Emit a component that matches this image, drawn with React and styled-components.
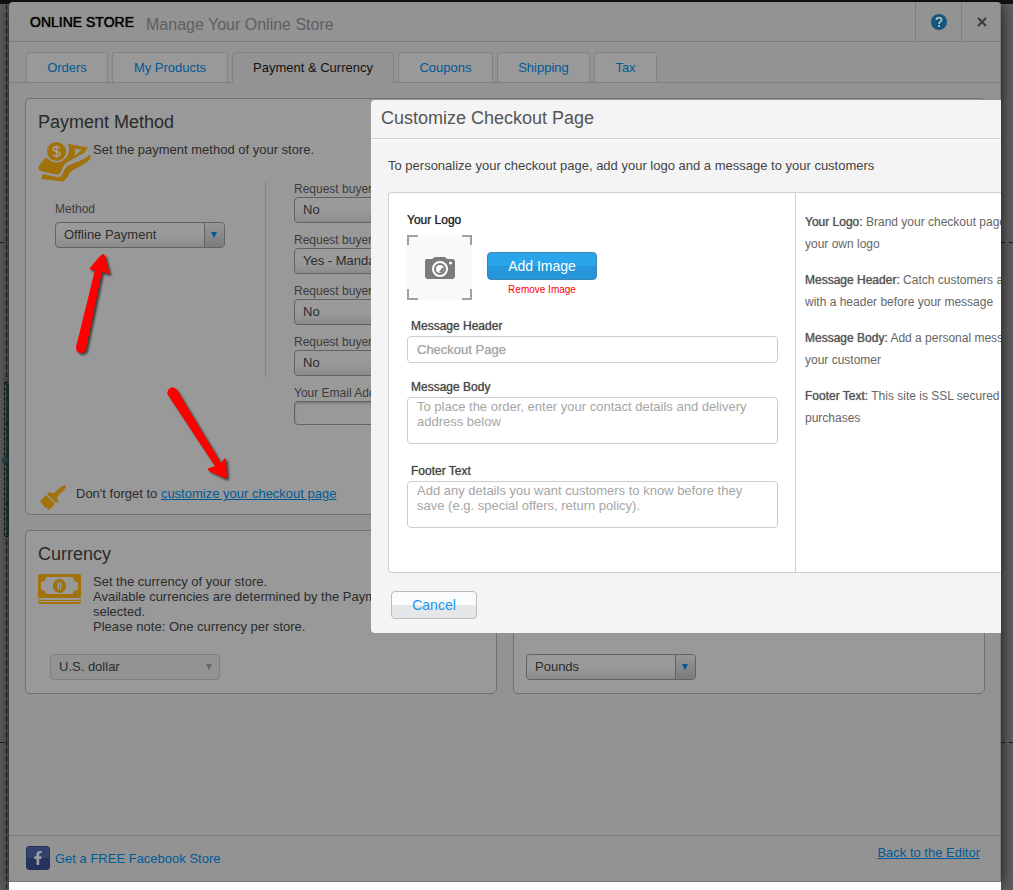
import { useState } from 'react'
import styled, { createGlobalStyle } from 'styled-components'
import { FaFacebookF } from 'react-icons/fa'

const GlobalStyle = createGlobalStyle`
  * {
    box-sizing: border-box;
  }

  body {
    margin: 0;
    background: #5e5e5e;
    color: #2c2c2c;
    font: 13px/15px "Liberation Sans", Arial, sans-serif;
  }

  button, input, select, textarea {
    font: inherit;
  }

  h1, h2, p {
    margin: 0;
    font-weight: normal;
  }
`

const Page = styled.div`
  position: relative;
  display: flex;
  flex-direction: column;
  min-height: 100vh;
  padding: 2px 12px 0 9px;
  overflow: hidden;
`

const Canvas = styled.svg`
  position: absolute;
  top: 0;
  left: 0;
  width: 100%;
  height: 100%;
`

const Window = styled.main`
  position: relative;
  flex: 1;
  display: flex;
  flex-direction: column;
  overflow: hidden;
  background: #939393;
  border-radius: 4px 4px 0 0;
  border-bottom: 1px solid #777;
  box-shadow: inset -1px 0 0 #7c7c7c;
`

const WindowShadow = styled.div`
  position: relative;
  flex: 1;
  display: flex;
  border-radius: 4px 4px 0 0;
  box-shadow: 0 4px 14px rgba(0, 0, 0, 0.8);
`

const BottomStrip = styled.div`
  position: relative;
  height: 8px;
  background: #fdfdfd;
`

const Header = styled.header`
  display: flex;
  align-items: stretch;
  height: 40px;
  padding-left: 21px;
  border-bottom: 1px solid #7d7d7d;
`

const StoreName = styled.h1`
  padding-top: 12px;
  margin-right: 12px;
  font-size: 14px;
  line-height: 16px;
  color: #000;
  text-shadow: 0 0 1px #000;
`

const StoreHint = styled.span`
  flex: 1;
  padding-top: 13px;
  font-size: 16px;
  line-height: 20px;
  color: #5f5f5f;
`

const HeaderBtn = styled.button`
  display: flex;
  align-items: center;
  justify-content: center;
  width: ${({ $width }) => $width};
  padding: 0;
  background: none;
  border: 0;
  border-left: 1px solid #7d7d7d;
`

const Tabs = styled.nav`
  display: flex;
  gap: 4px;
  padding: 10px 17px 0;
  border-bottom: 1px solid #808080;
`

const Tab = styled.button`
  min-width: ${({ $width }) => $width};
  height: 30px;
  padding: 0 8px;
  border: 1px solid #838383;
  border-bottom: 0;
  border-radius: 4px 4px 0 0;
  background: #999;
  color: #005a96;
`

const ActiveTab = styled(Tab)`
  height: 31px;
  margin-bottom: -1px;
  padding-bottom: 1px;
  background: #939393;
  color: #111;
`

const Content = styled.div`
  flex: 1;
  padding: 15px 16px;
`

const Panel = styled.section`
  padding: 13px 12px;
  background: #999;
  border: 1px solid #707070;
  border-radius: 5px;
`

const PaymentPanel = styled(Panel)`
  margin-bottom: 15px;
  padding-bottom: 3px;
`

const PanelPair = styled.div`
  display: grid;
  grid-template-columns: 1fr 1fr;
  gap: 16px;
`

const CurrencyPanel = styled(Panel)`
  display: flex;
  flex-direction: column;
  min-height: 164px;
`

const PanelTitle = styled.h2`
  font-size: 18px;
  line-height: 20px;
  color: #2a2a2a;
`

const Intro = styled.div`
  display: grid;
  grid-template-columns: 55px 1fr;
  align-items: start;
  margin-top: 10px;
`

const Columns = styled.div`
  display: flex;
  height: 195px;
`

const MethodColumn = styled.div`
  width: 228px;
  padding: 20px 17px 0;
  border-right: 1px solid #838383;
`

const BuyerColumn = styled.div`
  display: flex;
  flex-direction: column;
  gap: 10px;
  width: 200px;
  margin-left: 28px;
`

const Field = styled.label`
  display: flex;
  flex-direction: column;
  font-size: 12px;
  line-height: 15px;
  color: #3c3c3c;
  white-space: nowrap;
`

const SelectBox = styled.span`
  display: flex;
  width: 170px;
  height: 26px;
  margin-top: ${({ $gap }) => $gap || '0'};
  overflow: hidden;
  border: 1px solid ${({ $disabled }) => ($disabled ? '#808080' : '#626262')};
  border-radius: 4px;
  background: ${({ $disabled }) => ($disabled
    ? '#939393' : 'linear-gradient(#9a9a9a 50%, #8c8c8c)')};
`

const NativeSelect = styled.select`
  flex: 1;
  min-width: 0;
  padding: 0 8px 2px;
  appearance: none;
  background: none;
  border: 0;
  color: #2c2c2c;
  font-size: 13px;
  opacity: 1;
`

const SelectArrow = styled.span`
  display: flex;
  align-items: center;
  justify-content: center;
  width: 20px;
  padding-right: 1px;
  color: ${({ $disabled }) => ($disabled ? '#666' : '#005a96')};
  border-left: ${({ $disabled }) => ($disabled ? '0' : '1px solid #626262')};
  background: ${({ $disabled }) => ($disabled
    ? 'none' : 'linear-gradient(#969696, #7c7c7c)')};
`

const EmailInput = styled.input`
  width: 170px;
  height: 24px;
  padding: 0 8px;
  border: 1px solid #626262;
  border-radius: 4px;
  background: #999;
  box-shadow: inset 0 2px 2px #808080;
`

const Reminder = styled.p`
  display: flex;
  gap: 10px;
  align-items: flex-end;
  margin: 108px 0 0 2px;
`

const ReminderText = styled.span`
  padding-bottom: 10px;
`

const Link = styled.a`
  color: #005a96;
  text-decoration: ${({ $plain }) => ($plain ? 'none' : 'underline')};
`

const CurrencySelect = styled.div`
  margin: auto 0 0 ${({ $indent }) => $indent};
`

const Footer = styled.footer`
  display: flex;
  justify-content: space-between;
  height: 46px;
  padding: 9px 21px 0 17px;
  border-top: 1px solid #7d7d7d;
`

const FacebookStore = styled.div`
  display: flex;
  gap: 5px;
  align-items: center;
  height: 26px;
`

const FacebookLogo = styled.span`
  display: flex;
  align-items: center;
  justify-content: center;
  width: 24px;
  height: 24px;
  border: 1px solid #223158;
  border-radius: 3px;
  background: linear-gradient(#33416c 50%, #23335c 50%);
  color: #9b9ba2;
`

/* ---------- checkout dialog ---------- */

const Dialog = styled.section`
  position: absolute;
  top: 98px;
  left: 362px;
  right: 0;
  overflow: hidden;
  padding-bottom: 14px;
  background: #f4f4f4;
  border-radius: 4px 0 0 4px;
`

const DialogTitle = styled.h2`
  padding: 8px 10px 10px;
  border-bottom: 1px solid #cfcfcf;
  box-shadow: 0 1px 0 #fff;
  font-size: 18px;
  line-height: 20px;
  color: #555;
`

const DialogIntro = styled.p`
  padding: 19px 17px;
  color: #444;
`

const DialogBody = styled.div`
  display: grid;
  grid-template-columns: 407px 1fr;
  min-height: 381px;
  margin-left: 17px;
  background: #fff;
  border: 1px solid #d0d0d0;
  border-right: 0;
  border-radius: 4px 0 0 4px;
`

const Form = styled.form`
  padding: 19px 17px 0 18px;
  border-right: 1px solid #d0d0d0;
`

const LogoLabel = styled.div`
  font-size: 12px;
  line-height: 16px;
  color: #222;
  text-shadow: 0 0 1px #666;
`

const LogoRow = styled.div`
  display: flex;
  gap: 15px;
  margin: 7px 0 18px;
`

const LogoActions = styled.div`
  display: flex;
  flex-direction: column;
  align-items: center;
  gap: 3px;
  padding-top: 17px;
`

const AddBtn = styled.button`
  width: 110px;
  height: 28px;
  padding: 0;
  border: 1px solid #3d86b2;
  border-radius: 4px;
  background: linear-gradient(#2aa5ec 50%, #2496d9 50%);
  color: #fff;
  font-size: 14px;
`

const RemoveBtn = styled.button`
  padding: 0;
  border: 0;
  background: none;
  color: #f00;
  font-size: 10px;
  line-height: 14px;
`

const MessageField = styled.div`
  display: flex;
  flex-direction: column;
  gap: 2px;
  margin-bottom: ${({ $space }) => $space || '16px'};
`

const MessageLabel = styled.label`
  padding-left: 4px;
  font-size: 12px;
  line-height: 16px;
  color: #444;
  text-shadow: 0 0 1px #777;
`

const MessageInput = styled.input`
  height: 27px;
  padding: 0 9px;
  border: 1px solid #ccc;
  border-radius: 4px;

  &::placeholder {
    color: #a6a6a6;
    text-shadow: 0 0 1px #bbb;
  }
`

const MessageArea = styled.textarea`
  height: 47px;
  padding: 1px 9px;
  border: 1px solid #ccc;
  border-radius: 4px;
  resize: none;
  overflow: hidden;

  &::placeholder {
    color: #a6a6a6;
  }
`

const Help = styled.div`
  padding: 18px 0 0 9px;
  font-size: 12px;
  line-height: 22px;
  color: #666;
  white-space: nowrap;
`

const HelpItem = styled.p`
  margin-bottom: 14px;
`

const HelpName = styled.span`
  color: #555;
  text-shadow: 0 0 1px #666;
`

const CancelBtn = styled.button`
  display: block;
  width: 86px;
  height: 28px;
  margin: 18px 0 0 20px;
  padding: 0;
  border: 1px solid #bbb;
  border-radius: 4px;
  background: linear-gradient(#fafbfc 50%, #e6e7e9 50%);
  color: #1896f0;
  font-size: 14px;
`

const RedArrow = styled.svg`
  position: absolute;
  top: ${({ $top }) => $top};
  left: ${({ $left }) => $left};
  filter: drop-shadow(2px 2px 1px rgba(0, 0, 0, 0.6));
  pointer-events: none;
`

const tabs = [
  { name: 'Orders', width: '82px' },
  { name: 'My Products', width: '116px' },
  { name: 'Payment & Currency', width: '162px' },
  { name: 'Coupons', width: '95px' },
  { name: 'Shipping', width: '93px' },
  { name: 'Tax', width: '63px' },
]

const buyerFields = [
  { label: "Request buyer's phone", value: 'No' },
  { label: "Request buyer's address", value: 'Yes - Mandatory' },
  { label: "Request buyer's comment", value: 'No' },
  { label: "Request buyer's company", value: 'No' },
]

const helpItems = [
  { name: 'Your Logo:', first: 'Brand your checkout page with', second: 'your own logo' },
  { name: 'Message Header:', first: 'Catch customers attention', second: 'with a header before your message' },
  { name: 'Message Body:', first: 'Add a personal message to', second: 'your customer' },
  { name: 'Footer Text:', first: 'This site is SSL secured for', second: 'purchases' },
]

function PaymentIcon() {
  return (
    <svg width="54" height="40" viewBox="0 0 54 40" fill="#a1720a">
      <path fillRule="evenodd" d="M30 2 L50 5.500 L46 11 L31 19 Q26 20 23 23 L20 19 L28 16 Q33 9 30 2Z M36.500 6.500 L44 7.500 L36 14.500 Q38 10 36.500 6.500Z" />
      <path d="M7 16 L1 24 Q-1 28 3 29 L20 33 Q23 31 25 25 Q27 20 34 18 L28 18 Z" />
      <path d="M4.500 32 L21 35.500 Q24 34 27 27 Q29 23 36 21 Q46 18 52 12.500 Q54 16 49 20 Q43 24 35 28 Q32 30 30 34 Q28 38 25 39.500 L3.500 37Z" />
      <circle cx="18.500" cy="9.500" r="11" fill="#999" />
      <circle cx="18.500" cy="9.500" r="9.500" />
      <path d="M22 6.500 C21 4 15 4 15 7 C15 10.500 22 8.500 22 12 C22 15 16 15 15 12.500 M18.500 3.500 V15.500" fill="none" stroke="#a6a096" strokeWidth="1.500" />
    </svg>
  )
}

function MoneyIcon() {
  return (
    <svg width="44" height="31" viewBox="0 0 44 31" fill="#a1720a">
      <rect width="43" height="24" rx="2" />
      <path fill="#999" d="M8 3 H35 C35 6 37 8 40 8 V16 C37 16 35 17 35 20 H8 C8 17 6 16 3 16 V8 C6 8 8 6 8 3Z" />
      <ellipse cx="21.500" cy="12" rx="6.500" ry="7" />
      <rect x="19.500" y="8" width="4" height="8" rx="2" fill="#999" />
      <rect x="21" y="9" width="1" height="6" />
      <path d="M0 24 Q1 26 3 26 H40 Q42 26 43 24 V25 Q42 27 40 27 H3 Q1 27 0 25Z M0 26 Q1 28 3 28 H40 Q42 28 43 26 V28 Q42 30 40 30 H3 Q1 30 0 28Z" />
    </svg>
  )
}

function BrushIcon() {
  return (
    <svg width="26" height="26" viewBox="0 0 26 26" fill="#a1720a">
      <path d="M7 9 L10 7 Q12 9 14 8 L21 2 Q24 0 26 0 Q26 3 24 5 L17 12 Q16 14 19 16 L16 18Z" />
      <path d="M6 10 L15 19 L9 25 L7 24 L8 22 L5 23 L3 20 L0 16Z" />
    </svg>
  )
}

function CameraFrame() {
  return (
    <svg width="65" height="65" viewBox="0 0 65 65">
      <rect width="65" height="65" fill="#f9f9f9" />
      <path d="M1 10 V1 H11 M55 1 H64 V10 M64 54 V64 H55 M11 64 H1 V54" fill="none" stroke="#a0a0a0" strokeWidth="2" />
      <path d="M20 24 H25 L28 22 H38 L40 24 H45 Q48 24 48 27 V41 Q48 44 45 44 H21 Q18 44 18 41 V26 Q18 24 20 24Z" fill="#7b7b7b" />
      <circle cx="33" cy="34" r="7" fill="#7b7b7b" stroke="#fff" strokeWidth="2" />
      <circle cx="33" cy="34" r="4" fill="#fff" />
      <path d="M32 37 L36 32 Q38 34 35 38 Z" fill="#7b7b7b" />
      <circle cx="43.500" cy="28" r="1.500" fill="#fff" />
    </svg>
  )
}

function Select({ value, label, disabled, gap }) {
  return (
    <SelectBox $disabled={disabled} $gap={gap}>
      <NativeSelect aria-label={label} disabled={disabled} defaultValue={value}>
        <option>{value}</option>
      </NativeSelect>
      <SelectArrow $disabled={disabled}>
        <svg width="6" height="6" viewBox="0 0 6 6" fill="currentColor">
          <path d="M0 0 H6 L3 6Z" />
        </svg>
      </SelectArrow>
    </SelectBox>
  )
}

function EditorCanvas() {
  return (
    <Canvas>
      <rect width="100%" height="4" fill="#121212" />
      <path d="M6.500 5 V890" stroke="#1c1c1c" strokeDasharray="4 4" />
      <path d="M0 242.500 H5 M0 742.500 H5 M1001 242.500 H1013 M1001 742.500 H1013" stroke="#1c1c1c" strokeDasharray="4 4" />
      <rect x="4.500" y="382.500" width="20" height="154" fill="none" stroke="#111" strokeDasharray="3 2" />
      <rect x="7" y="384" width="20" height="151" fill="#2c3436" stroke="#0f4c54" />
      <circle cx="5.500" cy="460" r="3" fill="#3c5358" stroke="#0f4c54" />
    </Canvas>
  )
}

function CheckoutDialog() {
  return (
    <Dialog role="dialog" aria-label="Customize Checkout Page">
      <DialogTitle>Customize Checkout Page</DialogTitle>
      <DialogIntro>To personalize your checkout page, add your logo and a message to your customers</DialogIntro>
      <DialogBody>
        <Form>
          <LogoLabel>Your Logo</LogoLabel>
          <LogoRow>
            <CameraFrame />
            <LogoActions>
              <AddBtn type="button">Add Image</AddBtn>
              <RemoveBtn type="button">Remove Image</RemoveBtn>
            </LogoActions>
          </LogoRow>
          <MessageField>
            <MessageLabel htmlFor="message-header">Message Header</MessageLabel>
            <MessageInput id="message-header" placeholder="Checkout Page" />
          </MessageField>
          <MessageField $space="19px">
            <MessageLabel htmlFor="message-body">Message Body</MessageLabel>
            <MessageArea
              id="message-body"
              placeholder="To place the order, enter your contact details and delivery address below"
            />
          </MessageField>
          <MessageField>
            <MessageLabel htmlFor="footer-text">Footer Text</MessageLabel>
            <MessageArea
              id="footer-text"
              placeholder="Add any details you want customers to know before they save (e.g. special offers, return policy)."
            />
          </MessageField>
        </Form>
        <Help>
          {helpItems.map(({ name, first, second }) => (
            <HelpItem key={name}>
              <HelpName>{name}</HelpName> {first}<br />{second}
            </HelpItem>
          ))}
        </Help>
      </DialogBody>
      <CancelBtn type="button">Cancel</CancelBtn>
    </Dialog>
  )
}

export default function App() {
  const [activeTab, setActiveTab] = useState('Payment & Currency')

  return (
    <Page>
      <GlobalStyle />
      <EditorCanvas />
      <WindowShadow>
        <Window>
          <Header>
            <StoreName>ONLINE STORE</StoreName>
            <StoreHint>Manage Your Online Store</StoreHint>
            <HeaderBtn $width="46px" aria-label="Help">
              <svg width="16" height="16" viewBox="0 0 16 16">
                <circle cx="8" cy="8" r="8" fill="#13567c" />
                <path d="M5.500 6 C5.500 3 10.500 3 10.500 6 C10.500 8 8 7.500 8 10 M8 11 V13" fill="none" stroke="#a5b4bc" strokeWidth="2" />
              </svg>
            </HeaderBtn>
            <HeaderBtn $width="40px" aria-label="Close">
              <svg width="10" height="10" viewBox="0 0 10 10">
                <path d="M1 1 L9 9 M9 1 L1 9" stroke="#3a3a3a" strokeWidth="2" />
              </svg>
            </HeaderBtn>
          </Header>
          <Tabs>
            {tabs.map(({ name, width }) => {
              const TabBtn = name === activeTab ? ActiveTab : Tab
              return (
                <TabBtn key={name} $width={width} onClick={() => setActiveTab(name)}>
                  {name}
                </TabBtn>
              )
            })}
          </Tabs>
          <Content>
            <PaymentPanel>
              <PanelTitle>Payment Method</PanelTitle>
              <Intro>
                <PaymentIcon />
                <span>Set the payment method of your store.</span>
              </Intro>
              <Columns>
                <MethodColumn>
                  <Field>
                    Method
                    <Select value="Offline Payment" label="Method" gap="5px" />
                  </Field>
                </MethodColumn>
                <BuyerColumn>
                  {buyerFields.map(({ label, value }) => (
                    <Field key={label}>
                      {label}
                      <Select value={value} label={label} />
                    </Field>
                  ))}
                  <Field>
                    Your Email Address
                    <EmailInput type="email" />
                  </Field>
                </BuyerColumn>
              </Columns>
              <Reminder>
                <BrushIcon />
                <ReminderText>
                  Don't forget to <Link href="#checkout">customize your checkout page</Link>
                </ReminderText>
              </Reminder>
            </PaymentPanel>
            <PanelPair>
              <CurrencyPanel>
                <PanelTitle>Currency</PanelTitle>
                <Intro>
                  <MoneyIcon />
                  <span>
                    Set the currency of your store.<br />
                    Available currencies are determined by the Payment<br />
                    selected.<br />
                    Please note: One currency per store.
                  </span>
                </Intro>
                <CurrencySelect $indent="12px">
                  <Select value="U.S. dollar" label="Currency" disabled />
                </CurrencySelect>
              </CurrencyPanel>
              <CurrencyPanel>
                <CurrencySelect $indent="0">
                  <Select value="Pounds" label="Weight unit" />
                </CurrencySelect>
              </CurrencyPanel>
            </PanelPair>
          </Content>
          <Footer>
            <FacebookStore>
              <FacebookLogo>
                <FaFacebookF size={14} />
              </FacebookLogo>
              <Link href="#facebook" $plain>Get a FREE Facebook Store</Link>
            </FacebookStore>
            <Link href="#editor">Back to the Editor</Link>
          </Footer>
          <CheckoutDialog />
        </Window>
      </WindowShadow>
      <BottomStrip />
      <RedArrow $top="250px" $left="70px" width="50" height="110" viewBox="0 0 50 110" fill="#f00">
        <path d="M33 4 Q31 4 20 18 Q19 21 25 20 L6 97 Q6 103 11 103 Q15 103 16 99 L32 22 L38 24 Q40 24 39 21 L35 6 Q34 4 33 4Z" />
      </RedArrow>
      <RedArrow $top="380px" $left="160px" width="76" height="110" viewBox="0 0 76 110" fill="#f00">
        <path d="M8 15 Q6 11 10 8 Q14 6 17 10 L61 83 L64 79 Q66 77 66 80 L67 97 Q67 99 64 98 L49 91 Q47 89 49 88 L55 86Z" />
      </RedArrow>
    </Page>
  )
}
